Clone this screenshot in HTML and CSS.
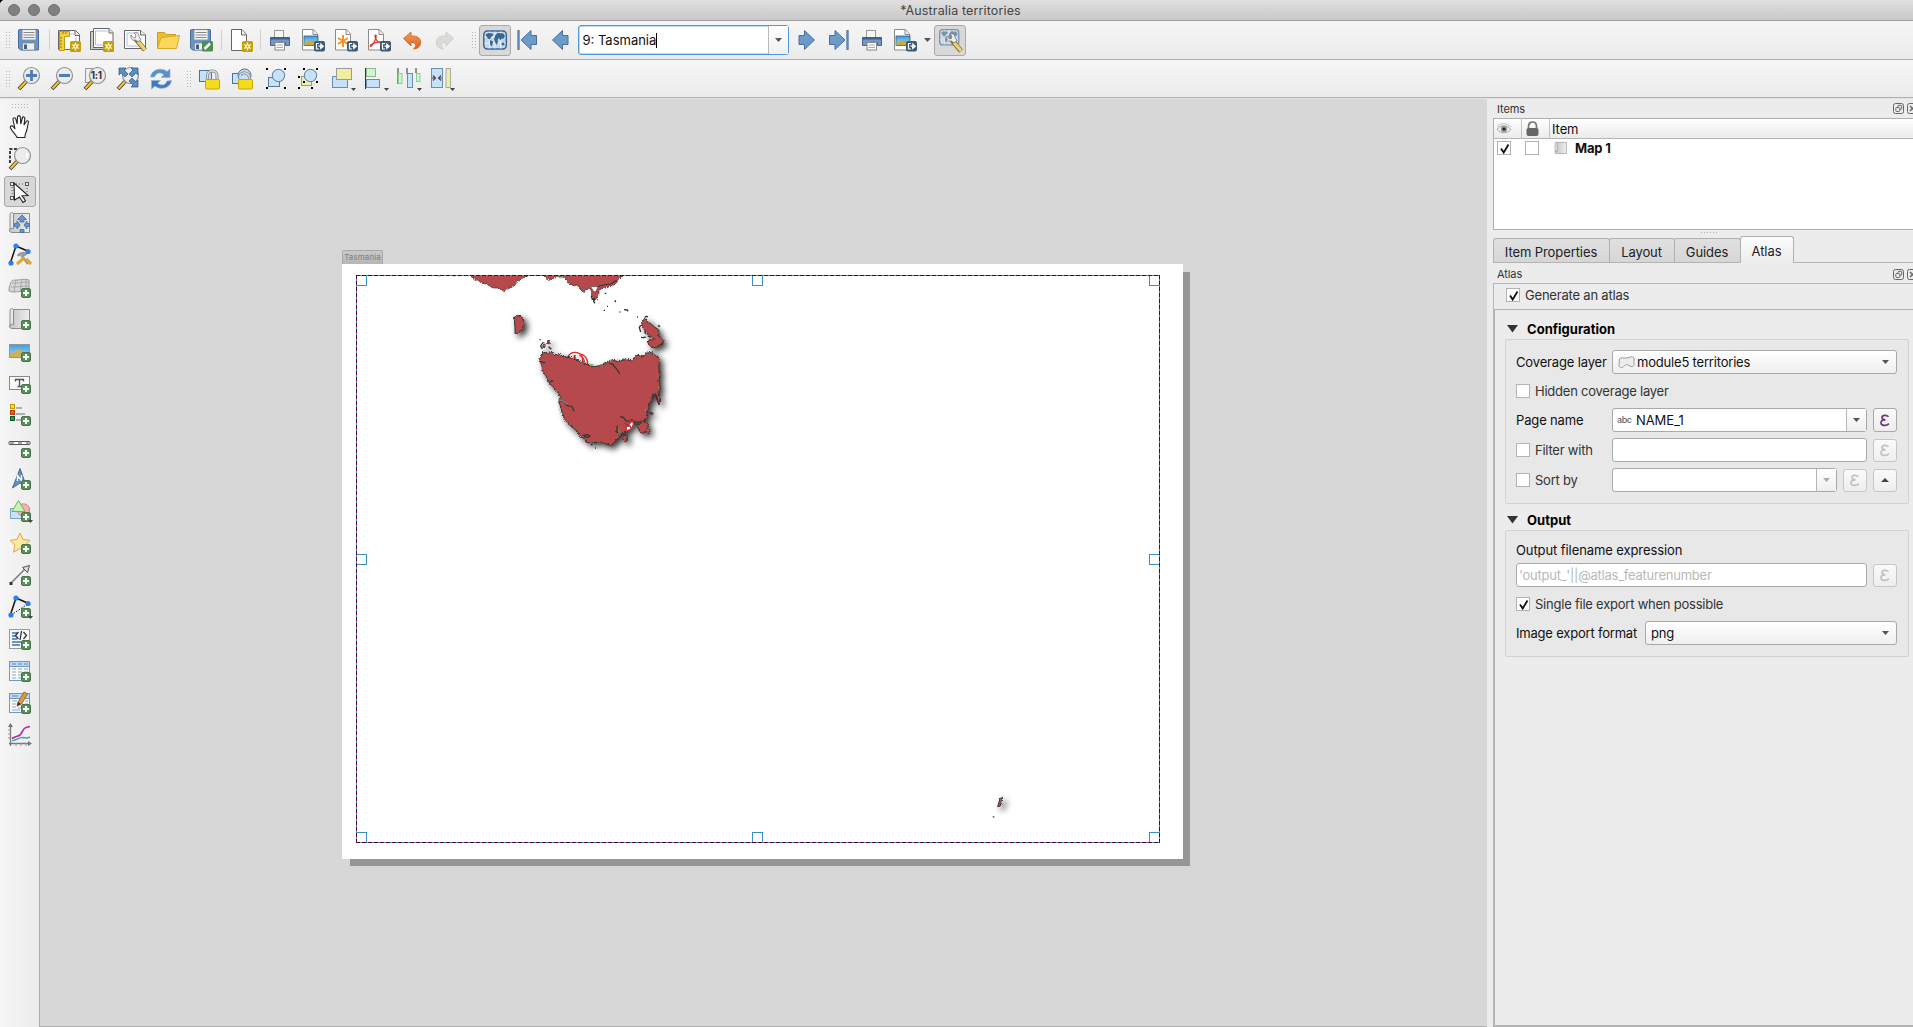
FILE: index.html
```html
<!DOCTYPE html>
<html lang="en">
<head>
<meta charset="utf-8">
<title>*Australia territories</title>
<link rel="stylesheet" href="styles.css">
</head>
<body>
<svg class="defs" width="0" height="0">
  <defs>
    <linearGradient id="sky" x1="0" y1="0" x2="0" y2="1"><stop offset="0" stop-color="#3f9be0"/><stop offset="1" stop-color="#a6dcf4"/></linearGradient>
    <linearGradient id="metal" x1="0" y1="0" x2="1" y2="0"><stop offset="0" stop-color="#c4c4c4"/><stop offset="1" stop-color="#eeeeee"/></linearGradient>
    <linearGradient id="undoFill" x1="0" y1="0" x2="0" y2="1"><stop offset="0" stop-color="#f39a5a"/><stop offset="1" stop-color="#d9651f"/></linearGradient>
    <filter id="rough" x="-5%" y="-5%" width="110%" height="110%"><feTurbulence type="turbulence" baseFrequency=".35" numOctaves="2" seed="4" result="n"/><feDisplacementMap in="SourceGraphic" in2="n" scale="9" xChannelSelector="R" yChannelSelector="G"/></filter>

    <g id="plus"><rect x="13.5" y="13.5" width="9" height="9" rx="1.5" fill="#5b8f5d" stroke="#447746"/><path d="M18 15v6M15 18h6" stroke="#fff" stroke-width="2"/></g>
    <g id="spark"><rect x="13" y="13" width="11" height="11" rx="1.5" fill="#c4a10a"/><path d="M18.500 14.500v8M15 16.500l7 4M22 16.500l-7 4" stroke="#fff6cf" stroke-width="1.300"/><circle cx="18.500" cy="18.500" r="2.300" fill="#fff6cf"/><circle cx="18.500" cy="18.500" r=".9" fill="#c4a10a"/></g>
    <g id="export"><rect x="13" y="13" width="11" height="10.500" rx="2" fill="#3f5b73"/><path d="M18 15.500h-2.500v5.500H18M17.500 18.200h4M19.800 16v4.500l2.500-2.200z" fill="none" stroke="#fff" stroke-width="1.200"/></g>
    <g id="sheet"><path d="M1.500 1.500h11l4 4.500v16h-15z" fill="#fff" stroke="#8a8a8a"/><path d="M12 1.500v5h4.500" fill="#eee" stroke="#8a8a8a"/></g>
    <g id="glass"><path d="M10 13.500l-8 8.500" stroke="#40382a" stroke-width="3.800"/><path d="M9 14.500l-6.500 7" stroke="#f3c531" stroke-width="2.200"/><circle cx="14.500" cy="8.500" r="8" fill="#ececec" stroke="#909090" stroke-width="1.200"/></g>
    <g id="wrench"><path d="M10 9l10 12" stroke="#7d6a2b" stroke-width="5"/><path d="M13 12.500l7 8.300" stroke="#ecd470" stroke-width="3.300"/><path d="M6 6l2.500 3 2-.5.300-2.500L9 4c3-1 5 .5 5 3.500l2 3-3 2.500-2.500-2C7.500 12 5 9.500 6 6z" fill="#eee" stroke="#777" stroke-width=".8"/></g>
    <g id="floppy"><path d="M2.500 1.500h18.500l.5.500v20h-18l-2-2v-18z" fill="#6a92c3" stroke="#4a6f9e"/><rect x="5.500" y="2" width="13" height="9.500" fill="#f4f4f4" stroke="#ccc" stroke-width=".5"/><path d="M6.500 4.500h11M6.500 7h11M6.500 9.500h11" stroke="#888" stroke-width="1"/><rect x="5.500" y="15" width="12" height="7" fill="#eee" stroke="#777" stroke-width=".6"/><rect x="7" y="16.500" width="3" height="4.500" fill="#3d5e8b"/></g>
    <g id="nodes"><path d="M2.500 19.500L8 3M8 3l11.500 5" stroke="#111" stroke-width="1.500" fill="none"/></g>
    <g id="dots3" fill="#2d7ff0"><circle cx="8" cy="3" r="2.600"/><circle cx="20" cy="8.500" r="2.600"/><circle cx="3" cy="20" r="2.600"/></g>
    <g id="worldmap"><rect x=".8" y="3" width="22.500" height="18" rx="3.500" fill="#c3d8ee" stroke="#3d6694" stroke-width="1.500"/><path d="M1.500 9h21M1.500 15h21M6.500 3.500v17M12 3.500v17M17.500 3.500v17" stroke="#e6f0fa" stroke-width="1"/><path d="M2.500 6.500l3-1.500 4 .5 1 1.500-2.500 2-1 2.500-2-1-1.500-2zM7 12l3 1.500-.5 3-1.500 2-1-3zM12.500 7l2-2 6 .5 1.500 3-2 2.500-1.500-.5-1 2-1.500-2.500-1.500 2 .5 2-1.500 3-1.500-3-1-3zM18.500 15l2.500-.5.500 2.500-2.500.5z" fill="#39658f"/></g>
    <g id="roll"><path d="M5 2.500h16.500v19H4c-3 0-3-3-1.500-3.500" fill="url(#metal)" stroke="#8c8c8c"/><path d="M2 18V3.500C2 1 5.500 1 5.500 3.500v14c-2-.5-3.500 0-3.500 1.500z" fill="#e8e8e8" stroke="#8c8c8c"/></g>
    <g id="padlock"><path d="M8.500 13V8.500c0-6 9.500-6 9.500 0V13" fill="none" stroke="#888" stroke-width="3"/><path d="M8.500 13V8.500c0-6 9.500-6 9.500 0V13" fill="none" stroke="#ddd" stroke-width="1.400"/><rect x="6.500" y="12.500" width="14" height="9.500" rx="1" fill="#f2dc1c" stroke="#c9a505"/></g>
    <g id="printer"><path d="M6.500 10V2.500h9V10" fill="#f5f5f5" stroke="#999"/><path d="M2.500 9.500h19v8h-4v-3h-10v3h-5z" fill="#6f98c8" stroke="#44668f"/><path d="M2.500 9.500h19v2h-19z" fill="#3e6088"/><rect x="7" y="14.500" width="9.500" height="7.500" fill="#fff" stroke="#888"/><path d="M8.500 17h6.500M8.500 19.500h6.500" stroke="#aaa"/></g>
    <g id="image"><use href="#sheet"/><rect x="3" y="8" width="14" height="9.500" fill="url(#sky)" stroke="#3b5d77" stroke-width=".8"/><path d="M3.400 15l5-2.500 4 .5 4.200 2v2H3.400z" fill="#c6a941"/><use href="#export"/></g>
    <g id="arrowL"><path d="M2.500 12L12.500 2.500v5H18v9h-5.500v5z" fill="#6d9ac9" stroke="#44709f"/></g>
    <g id="caret"><path d="M0 0h7L3.500 4z"/></g>
    <g id="eps"><path d="M8.500 2.800C6.500.6 2 1 2 3.600c0 1.500 1.200 2.200 3.500 2.200C2.700 5.800 1 6.700 1 8.700c0 3.200 5.300 3.700 8 1" fill="none" stroke="currentColor" stroke-width="1.700"/></g>
    <g id="float"><rect x=".5" y=".5" width="10" height="10" rx="2"/><rect x="2.800" y="4.500" width="4" height="4" rx="1"/><path d="M5 4V3c0-.5.300-.7.700-.7H8c.5 0 .7.300.7.700v2.500c0 .4-.2.700-.7.700H7"/></g>
    <g id="close"><rect x=".5" y=".5" width="10" height="10" rx="2"/><path d="M3 3l5 5M8 3L3 8" stroke-width="1.500"/></g>
    <g id="tick"><path d="M3 6.500l2.700 4L10.500 2.500" fill="none" stroke="#111" stroke-width="1.800"/></g>
  </defs>
</svg>

<div class="window">
  <header class="titlebar">
    <div class="lights"><i></i><i></i><i></i></div>
    <span class="title">*Australia territories</span>
  </header>

  <div class="toolbar bar-main">
    <i class="grip"></i>
    <div class="icons lead">
      <svg class="ic" viewBox="0 0 24 24"><use href="#floppy"/></svg>
      <i class="sep"></i>
      <svg class="ic" viewBox="0 0 24 24"><path d="M1.500 2.500h17l4 4v15h-21z" fill="#fff" stroke="#666"/><path d="M18 2.500v5h4.500" fill="#eee" stroke="#666"/><path d="M8 6h9M19 9v10" stroke="#a9bfe8"/><path d="M2.500 22.500V3.500h10v5h-5v14z" fill="#f2cf3f" stroke="#c49b12"/><path d="M3 10h2M3 13h2M3 16h2M3 19h2M6 4v2M9 4v2" stroke="#9b7a0e"/><use href="#spark"/></svg>
      <svg class="ic" viewBox="0 0 24 24"><path d="M.5 3.500h3v16h15v2H.5z" fill="#ccc" stroke="#666"/><path d="M3.500.5h15.500l4 4v15H3.500z" fill="#fff" stroke="#666"/><path d="M19 .5v4.500h4" fill="#eee" stroke="#666"/><path d="M5.500 3h12M5.500 3v14h11" stroke="#a9bfe8" fill="none"/><use href="#spark"/></svg>
      <svg class="ic" viewBox="0 0 24 24"><path d="M1.500 2.500h16l5 4.500v13.500h-21z" fill="#fff" stroke="#666"/><path d="M17.500 2.500v4.500h5" fill="#eee" stroke="#666"/><path d="M4 5h12M4 5v13h13" stroke="#a9bfe8" fill="none"/><g transform="translate(2,1)"><use href="#wrench"/></g></svg>
      <svg class="ic" viewBox="0 0 24 24"><path d="M1.500 20V4.500h7l2 2h9v4" fill="#eebd33" stroke="#cf9c1b"/><path d="M1.500 20.500L5 9.500l18.500-2-3 13z" fill="#fbd75a" stroke="#d9a827"/></svg>
      <svg class="ic" viewBox="0 0 24 24"><use href="#floppy"/><rect x="13" y="13" width="11" height="10.500" rx="1.500" fill="#4f8f52"/><path d="M15.500 21l5.500-5.500" stroke="#fff" stroke-width="2.500"/></svg>
      <i class="sep"></i>
      <svg class="ic" viewBox="0 0 24 24"><path d="M2.500 1.500h10.500l4.500 5v16h-15z" fill="#fff" stroke="#666"/><path d="M12.500 1.500v5.500h5" fill="#eee" stroke="#666"/><use href="#spark"/></svg>
      <i class="sep tight"></i>
      <svg class="ic" viewBox="0 0 24 24"><use href="#printer"/></svg>
      <svg class="ic" viewBox="0 0 24 24"><use href="#image"/></svg>
      <svg class="ic" viewBox="0 0 24 24"><use href="#sheet"/><path d="M9 7v12M4 10l10 6M14 10L4 16" stroke="#f39322" stroke-width="2"/><use href="#export"/></svg>
      <svg class="ic" viewBox="0 0 24 24"><use href="#sheet"/><path d="M8.500 7c1.500 0 .5 6-4 11-1.500 1-2-.5.500-2 3-1.500 7-2.500 10-2M8.500 7c-1.500 1.500 1 7 5.500 8.500" fill="none" stroke="#e0352b" stroke-width="1.300"/><use href="#export"/></svg>
      <svg class="ic" viewBox="0 0 24 24"><path d="M3.500 10.500L11 4v4c7-.5 10.500 3 9.500 8-.7 3-3.500 5-7 5 3-2 3.500-7-2.500-6.500v3.500z" fill="url(#undoFill)" stroke="#cf621f" stroke-width=".8"/></svg>
      <svg class="ic" viewBox="0 0 24 24"><path d="M20.500 10.500L13 4v4c-7-.5-10.500 3-9.500 8 .7 3 3.500 5 7 5-3-2-3.500-7 2.500-6.500v3.500z" fill="#d9dbd7" stroke="#c9cbc7" stroke-width=".8"/></svg>
    </div>
    <i class="grip grip-atlas"></i>
    <button class="tool on"><svg class="ic" viewBox="0 0 24 24"><use href="#worldmap"/></svg></button>
    <svg class="ic first" viewBox="0 0 24 24"><g transform="translate(3.500,0)"><use href="#arrowL"/></g><path d="M3.500 2v20" stroke="#5d88b6" stroke-width="2.500"/></svg>
    <svg class="ic prev" viewBox="0 0 24 24"><g transform="translate(1,0)"><use href="#arrowL"/></g></svg>
    <div class="page-combo"><span>9: Tasmania</span><i class="cursor"></i><b><svg width="7" height="4" fill="#555"><use href="#caret"/></svg></b></div>
    <svg class="ic next" viewBox="0 0 24 24"><g transform="translate(23,0) scale(-1,1)"><use href="#arrowL"/></g></svg>
    <svg class="ic last" viewBox="0 0 24 24"><g transform="translate(20.500,0) scale(-1,1)"><use href="#arrowL"/></g><path d="M20.500 2v20" stroke="#5d88b6" stroke-width="2.500"/></svg>
    <svg class="ic prn" viewBox="0 0 24 24"><use href="#printer"/></svg>
    <svg class="ic exp" viewBox="0 0 24 24"><use href="#image"/></svg>
    <svg class="drop" width="7" height="4" fill="#555"><use href="#caret"/></svg>
    <button class="tool on"><svg class="ic" viewBox="0 0 24 24"><g opacity=".6" transform="translate(1,-1) scale(.85)"><use href="#worldmap"/></g><g transform="translate(3,2)"><use href="#wrench"/></g></svg></button>
  </div>

  <div class="toolbar bar-view">
    <i class="grip"></i>
    <div class="icons lead">
      <svg class="ic" viewBox="0 0 24 24"><use href="#glass"/><path d="M14.500 3v11M9 8.500h11" stroke="#4b7fb8" stroke-width="2.800"/></svg>
      <svg class="ic" viewBox="0 0 24 24"><use href="#glass"/><path d="M9 8.500h11" stroke="#4b7fb8" stroke-width="2.800"/></svg>
      <svg class="ic" viewBox="0 0 24 24"><path d="M2.500 1.500h8v14h-8z" fill="#eee" stroke="#999"/><use href="#glass"/><text x="7.800" y="12.300" class="one">1:1</text></svg>
      <svg class="ic" viewBox="0 0 24 24"><use href="#glass"/><path d="M3 1h7L8 3l4 4-3 3-4-4-2 2zM22 1v7l-2-2-4 4-3-3 4-4-2-2zM22 20h-7l2-2-4-4 3-3 4 4 2-2z" fill="#5b8cc2" stroke="#35618f" stroke-width=".8"/></svg>
      <svg class="ic" viewBox="0 0 24 24"><path d="M1.500 10C2.500 2 13 0 18 4.500l3-2.500v8.500h-9l3-2.800c-4-3-8-2-9.500 2.300z" fill="#5b8fca" stroke="#86b0de" stroke-width=".6"/><path d="M22.500 13.500c-1 8-11.500 10-16.500 5.500l-3.500 3v-8.500h9l-3 2.800c4 3 8 2 9.500-2.300z" fill="#4479b9" stroke="#86b0de" stroke-width=".6"/></svg>
    </div>
    <i class="grip grip-actions"></i>
    <div class="icons actions">
      <svg class="ic" viewBox="0 0 24 24"><rect x=".5" y="3.500" width="12" height="11" fill="#c7e2f8" stroke="#4b7394"/><use href="#padlock"/></svg>
      <svg class="ic" viewBox="0 0 24 24"><rect x=".5" y="6.500" width="9" height="10" fill="#c7e2f8" stroke="#4b7394"/><circle cx="12.500" cy="8.500" r="6.500" fill="#c7e2f8" stroke="#4b7394"/><path d="M8 9c1-5 10-4 9.500 3" fill="none" stroke="#888" stroke-width="3"/><path d="M8 9c1-5 10-4 9.500 3" fill="none" stroke="#ddd" stroke-width="1.400"/><rect x="6.500" y="12.500" width="14" height="9.500" rx="1" fill="#f2dc1c" stroke="#c9a505"/></svg>
      <svg class="ic" viewBox="1 0 24 24"><rect x="4.500" y="10.500" width="11" height="9" fill="#c7e2f8" stroke="#56799a"/><circle cx="14.500" cy="8.500" r="6.200" fill="#c7e2f8" stroke="#56799a"/><path d="M2 2h2M20 2h2M2 21h2M20 21h2" stroke="#000" stroke-width="2"/></svg>
      <svg class="ic" viewBox="2 0 24 24"><rect x="5.500" y="9.500" width="10" height="9" fill="#f3eea6" stroke="#999"/><circle cx="14.500" cy="8.500" r="6.200" fill="#c7e2f8" stroke="#56799a"/><path d="M7 2h2M20 2h2M20 15h2M2 10h2M2 21h2M15 21h2M7 15h2" stroke="#000" stroke-width="2"/></svg>
      <svg class="ic" viewBox="0 0 24 24"><rect x="1.500" y="9.500" width="15" height="11" fill="#c7e2f8" stroke="#6b8fab"/><rect x="5.500" y="1.500" width="15" height="11" fill="#f1eea2" stroke="#999"/><path d="M20 21h5l-2.500 3z" fill="#444"/></svg>
      <svg class="ic" viewBox="0 0 24 24"><path d="M1.500 1v21" stroke="#333"/><rect x="2.500" y="1.500" width="9" height="8" fill="#cdf7cf" stroke="#8fb791"/><rect x="2.500" y="12.500" width="13" height="8" fill="#c7e2f8" stroke="#6b8fab"/><path d="M20 21h5l-2.500 3z" fill="#444"/></svg>
      <svg class="ic" viewBox="0 0 24 24"><path d="M1 1v16M10 1v6M19 1v5" stroke="#333"/><rect x="1.500" y="6.500" width="3.500" height="10" fill="#cdf7cf" stroke="#8fcb91"/><rect x="10.500" y="6.500" width="5" height="14" fill="#c7e2f8" stroke="#6b8fab"/><rect x="19.500" y="6.500" width="3.500" height="8" fill="#cdf7cf" stroke="#8fcb91"/><path d="M20 21h5l-2.500 3z" fill="#444"/></svg>
      <svg class="ic" viewBox="0 0 24 24"><rect x="1.500" y="1.500" width="11" height="19" fill="#c7e2f8" stroke="#6b8fab"/><rect x="16" y="1.500" width="4.500" height="19" fill="#f1eea2" stroke="#aaa"/><path d="M2 11h3M3 8.500L5.500 11 3 13.500M12 11H9M11 8.500L8.500 11l2.500 2.500" fill="none" stroke="#444" stroke-width="1.100"/><path d="M20 21h5l-2.500 3z" fill="#444"/></svg>
    </div>
  </div>

  <main class="body">
    <nav class="sidebar">
      <i class="hgrip"></i>
      <svg class="ic" viewBox="0 0 24 24"><path d="M9 22.500c-1-3-5-6-6.500-9.500C1.500 11 4 10 5.500 12l1.500 2L5 4.500c-.3-2 2.200-2.500 2.800-.5l1.400 5L9.500 2c.2-1.800 2.700-1.800 2.800 0l.5 7 1.500-6c.5-1.700 2.700-1.300 2.500.5L16 10l2.200-3.500c1-1.400 2.700-.5 2.200 1.200-1.500 5-1 8-3 11l-.5 3.800z" fill="#fff" stroke="#222" stroke-width="1.100"/></svg>
      <svg class="ic" viewBox="0 0 24 24"><path d="M2 16V2h12" fill="none" stroke="#000" stroke-width="1.500" stroke-dasharray="3 1.500"/><use href="#glass"/><path d="M19 6v5" stroke="#fff" stroke-width="1.500"/></svg>
      <button class="tool on wide"><svg class="ic" viewBox="0 0 24 24"><path d="M5 4h14M4 4v14M4 18h14M19 5v8" stroke="#555" stroke-dasharray="1 2"/><g fill="#eee" stroke="#555"><rect x="2.500" y="2.500" width="3" height="3"/><rect x="17.500" y="2.500" width="3" height="3"/><rect x="2.500" y="16.500" width="3" height="3"/></g><path d="M6 3l14 12.500-6 .3 3.500 5-2.500 1.700-3.500-5.500-5 3z" fill="#fff" stroke="#222" stroke-width="1.100"/></svg></button>
      <svg class="ic" viewBox="0 0 24 24"><use href="#roll"/><path d="M14 4l4.500 4.500H16V11h-4V8.500H9.500zM6.500 12.500h2.500V10l3 4-3 4v-2.500H6.500zM21.500 12.500H19V10l-3 4 3 4v-2.500h2.500zM12 18.500h4v3h-4z" fill="#6b96c8" stroke="#3d6b9e" stroke-width=".8"/></svg>
      <svg class="ic" viewBox="0 0 24 24"><use href="#nodes"/><path d="M10 13c2-4 8-3 8-2l-4 2 6 8" fill="none" stroke="#999" stroke-width="2.500"/><path d="M9 21l7-6M18 16l5 5" stroke="#e0a82e" stroke-width="3.200"/><use href="#dots3"/></svg>
      <svg class="ic" viewBox="0 0 24 24"><path d="M1 16C1 10 3 7 5 5c5 1 10-2 16 0v12c-5-3-13 2-20-1z" fill="#d8d8d8" stroke="#999"/><path d="M3 12c6 1 12-2 18-.5M4 8c6 1 11-2 17-.5M8 5l-2 12M14 4l-2 12M18 4v12" fill="none" stroke="#aaa"/><use href="#plus"/></svg>
      <svg class="ic" viewBox="0 0 24 24"><use href="#roll"/><use href="#plus"/></svg>
      <svg class="ic" viewBox="0 0 24 24"><rect x="1.500" y="5.500" width="20" height="13" fill="url(#sky)" stroke="#8a9aa3"/><path d="M2 15l9-5 5 3 5.500 1v4H2z" fill="#cdb257"/><use href="#plus"/></svg>
      <svg class="ic" viewBox="0 0 24 24"><rect x="1.500" y="5.500" width="20" height="13" fill="#fafafa" stroke="#888"/><path d="M7.500 10.500V8.500h8v2M11.500 8.500v7M9.500 15.500h4" fill="none" stroke="#555" stroke-width="1.300"/><use href="#plus"/></svg>
      <svg class="ic" viewBox="0 0 24 24"><path d="M8 5h6M8 11h9M8 17h5" stroke="#999" stroke-width="1.500"/><g stroke-width="1"><rect x="2.500" y="1.500" width="4" height="4" fill="#fcdc23" stroke="#c59a08"/><rect x="2.500" y="7.500" width="4" height="4" fill="#f25a20" stroke="#b5390b"/><rect x="2.500" y="13.500" width="4" height="4" fill="#17a048" stroke="#0b5f2a"/></g><use href="#plus"/></svg>
      <svg class="ic" viewBox="0 0 24 24"><rect x="1" y="6.500" width="21" height="3" rx=".5" fill="#fff" stroke="#555"/><path d="M2 8h4M10 8h4M18 8h3" stroke="#aaa" stroke-width="2"/><use href="#plus"/></svg>
      <svg class="ic" viewBox="0 0 24 24"><path d="M12 1.500l7 19.500-7-5-7.500 5z" fill="#658fbd" stroke="#466b94"/><path d="M9.500 14V8.500l4 5V8" stroke="#fff" stroke-width="1.400" fill="none"/><use href="#plus"/></svg>
      <svg class="ic" viewBox="0 0 24 24"><rect x="2.500" y="9.500" width="12" height="10" fill="#c7e2f8" stroke="#7ea6c4"/><circle cx="15.500" cy="11" r="6.200" fill="#f6b3b0" stroke="#cf8683"/><path d="M10.500 1.500l6.500 11H4z" fill="#c4f3b2" stroke="#77ab6c"/><use href="#plus"/><path d="M20 21h5l-2.500 3z" fill="#444"/></svg>
      <svg class="ic" viewBox="0 0 24 24"><path d="M12 2l3 6.500 7 .8-5 4.900 1.500 7L12 17.500l-6.500 3.700 1.500-7-5-4.900 7-.8z" fill="#fceaa0" stroke="#e0a659"/><use href="#plus"/></svg>
      <svg class="ic" viewBox="0 0 24 24"><path d="M3 20L19 4" stroke="#777" stroke-width="1.400"/><path d="M14.500 4.500l7-2-2 7z" fill="#ddd" stroke="#555"/><rect x="1.500" y="19" width="3" height="3" fill="#333"/><use href="#plus"/></svg>
      <svg class="ic" viewBox="0 0 24 24"><use href="#nodes"/><path d="M3 20l17-11" stroke="#111" stroke-dasharray="1.500 1.500"/><use href="#dots3"/><use href="#plus"/><path d="M20 21h5l-2.500 3z" fill="#444"/></svg>
      <svg class="ic" viewBox="0 0 24 24"><rect x="1.500" y="2.500" width="20" height="19" fill="#f8f8f8" stroke="#999"/><path d="M4 6h5M4 9h4M4 12h5M4 15h9M4 18h8" stroke="#6a94c4" stroke-width="1.800"/><path d="M10.500 5L7.500 8.500l3 3.500M13.500 4l-1.500 9M15.500 5l3 3.500-3 3.500" fill="none" stroke="#333" stroke-width="1.300"/><use href="#plus"/></svg>
      <svg class="ic" viewBox="0 0 24 24"><rect x="1.500" y="2.500" width="20" height="19" fill="#f8f8f8" stroke="#6d98c4"/><rect x="2" y="3" width="19" height="4" fill="#b9daf2"/><path d="M4 5h4M10 5h4M16 5h4" stroke="#5d89b7"/><path d="M4 10h4M10 10h4M16 10h4M4 13h4M10 13h4M16 13h4M4 16h4M10 16h3M4 19h4M10 19h3" stroke="#90a8c0"/><path d="M2 7.500h19" stroke="#6d98c4"/><use href="#plus"/></svg>
      <svg class="ic" viewBox="0 0 24 24"><rect x="1.500" y="2.500" width="20" height="19" fill="#f8f8f8" stroke="#6d98c4"/><rect x="2" y="3" width="19" height="4" fill="#b9daf2"/><path d="M4 5h6" stroke="#5d89b7"/><path d="M4 10h5M4 13h4M4 16h4M10 17h3M17 10h3M17 13h3M4 19h8" stroke="#90a8c0"/><path d="M2 7.500h19" stroke="#6d98c4"/><path d="M9 15l1-4 6-10 3.500 2-6 10z" fill="#e39a3f" stroke="#7a552a" stroke-width=".8"/><path d="M9 15l1-4 3 2z" fill="#333"/><use href="#plus"/></svg>
      <svg class="ic" viewBox="0 0 24 24"><path d="M2.500 23V3M1 20.500h21" stroke="#777" stroke-width="1.300"/><path d="M2.500 0L5 4H0zM24 20.500L20 18v5z" fill="#777"/><path d="M3 7h-3M3 11h-3M3 15h-3M8 20v3M13 20v3M18 20v3" stroke="#999"/><path d="M4 17.500c5 .5 6-3 10-3s4 1.500 8-.5" fill="none" stroke="#46a0b5" stroke-width="1.500"/><path d="M4 15.500c3-2 6-2 8-3.500 3-3 3-7 6-7.500l4-1" fill="none" stroke="#b5279b" stroke-width="1.700"/></svg>
    </nav>

    <section class="canvas">
      <span class="page-tag">Tasmania</span>
      <div class="page">
        <div class="map-item">
          <svg class="map" width="804" height="568" viewBox="0 0 804 568">
            <g transform="translate(-26,-35) scale(.33333)">
              <path class="mainland" d="M418 100L430 114 446 124 464 129 480 138 490 141 500 141 512 147 520 152 530 144 548 136 558 124 566 119 576 112 592 104zM640 100L646 112 656 118 668 112 690 106 704 112 716 130 730 134 738 132 748 142 754 155 764 152 772 144 782 148 782 166 790 178 798 178 803 166 804 150 812 144 836 138 852 130 862 118 878 104z"/>
              <g fill="#fff" stroke="#e32b2b" stroke-width="4">
                <path d="M740 345c18-8 36 8 32 30l-18-8"/>
                <path d="M714 350c8-18 38-18 43 4l2 18-24-7z"/>
                <path d="M734 345v15h12" fill="none" stroke-width="6"/>
                <path d="M748 346c12 4 16 14 14 22" fill="none"/>
              </g>
              <g class="land">
                <path d="M549 230L557 227 560 223 572 228 578 234 580 250 577 266 570 270 564 274 560 279 552 277 552 258z"/>
                <path d="M932 246L938 236 946 234 952 244 962 250 970 258 982 266 985 274 983 286 990 292 1001 303 996 310 984 312 978 318 968 320 956 314 950 304 956 298 972 296 966 290 954 286 946 272 936 262z"/>
                <path d="M636 332L650 339 664 334 672 345 688 340 694 346 714 350 740 359 770 373 790 377 812 373 830 364 848 358 862 362 884 356 904 360 918 342 936 348 950 336 964 334 968 342 978 346 986 356 983 380 988 400 984 420 988 440 984 458 989 480 984 492 978 466 966 460 962 480 954 490 954 508 948 512 950 530 940 542 918 544 904 538 906 552 896 566 884 574 872 580 860 596 852 600 842 615 826 608 800 604 768 606 760 592 750 588 740 572 716 552 704 540 694 516 684 484 690 470 680 454 668 440 652 422 648 410 636 392 630 366 626 354 632 348z"/>
                <path d="M914 548L926 552 934 542 946 544 954 552 950 562 957 570 954 578 944 574 934 578 926 570zM876 586L886 582 892 592 886 604 876 598zM958 515h8v8h-6zM636 314L642 308 642 320 636 324zM650 302h8v6h-8z"/>
                <path d="M2000 1697L2007 1673 2015 1669 2014 1680 2008 1695z"/>
              </g>
              <g class="rock">
                <path d="M323 107h8M370 107h6M386 107h4M824 159l5 2M855 181l2 6M831 199h3M821 211h4M882 209l10 1 2 4M868 216h3M921 231h3M944 232l6-3 4 2M932 256l-4 6 4 14M984 256l6 4M933 292l8 1 6-2M628 299h4M640 306l-8 12 4 8M656 320l8 8M784 168l3 10 6-2-2 8 4 6M783 612l4 4M795 624h3M944 274l3 8"/>
              </g>
              <g class="rivers">
                <path d="M848 373l12 14 10 15M838 370l14 4M690 482l12 2 8 12 16 4 6 14M660 428l4-6 6 2M632 366l14 2M758 586l14-2 8 4-6 4-12-2M870 530l10 2 8 10 12 2M856 574l8 4M862 556l-2 12 6 12M976 460l8 28M800 141l20-6 22-3 18-11"/>
                <path d="M684 479l16 4 12 10" stroke="#888"/>
              </g>
              <path class="bits" d="M684 110l8 4 10-2M780 374h10M810 374h6M838 363h6M878 357h6M984 410v6M985 440v6M866 570v8M946 508v6"/>
              <path d="M782 140l22 0-6 14-6 2z" fill="#fff" stroke="#555" stroke-width="2"/>
              <path d="M908 542c6 14-2 28-18 31l-2-12 10-10z" fill="#fff" stroke="#d03034" stroke-width="4"/>
              <path d="M888 560l8-6 8 10M884 548l12 12" stroke="#a33" stroke-width="4" fill="none"/>
              <path d="M1988 1730h4v4" fill="none" stroke="#555" stroke-width="3"/>
            </g>
          </svg>
          <svg class="frame" width="804" height="568"><rect x=".5" y=".5" width="803" height="567" fill="none" stroke="#3f93c4"/><path d="M0 .5h804M0 567.500h804M.5 0v568M803.500 0v568" fill="none" stroke="#560038" stroke-dasharray="4 2"/></svg>
          <i class="handle tl"></i><i class="handle tc"></i><i class="handle tr"></i>
          <i class="handle ml"></i><i class="handle mr"></i>
          <i class="handle bl"></i><i class="handle bc"></i><i class="handle br"></i>
        </div>
      </div>
    </section>

    <aside class="docks">
      <div class="dock-title items-title"><span>Items</span><svg width="20" height="11"><use href="#float"/><use href="#close" x="14"/></svg></div>
      <div class="tree">
        <div class="tree-head">
          <div class="c1"><svg width="16" height="12" viewBox="0 0 16 12"><path d="M1 6.500C4 1.500 11 1.500 15 6.500 11 11 5 11 1 6.500z" fill="#eee" stroke="#aaa"/><path d="M1 3.500C5-.5 11 0 15 4" fill="none" stroke="#bbb"/><circle cx="8" cy="6" r="3.200" fill="#9a9a94"/><circle cx="8" cy="6" r="1.600" fill="#222"/></svg></div>
          <div class="c2"><svg width="13" height="16" viewBox="0 0 13 16"><path d="M2.500 8V5.500c0-6 8-6 8 0V8" fill="none" stroke="#777" stroke-width="1.700"/><rect x=".5" y="7" width="12" height="8" rx="2" fill="#666"/></svg></div>
          <div class="c3">Item</div>
        </div>
        <div class="tree-row">
          <i class="check"><svg width="12" height="12"><use href="#tick"/></svg></i>
          <i class="check second"></i>
          <svg class="mapicon" width="14" height="14" viewBox="0 0 24 24"><use href="#roll"/></svg>
          <b>Map 1</b>
        </div>
      </div>
      <i class="split"></i>
      <div class="tabs">
        <span class="tab t1">Item Properties</span><span class="tab t2">Layout</span><span class="tab t3">Guides</span><span class="tab t4 active">Atlas</span>
      </div>
      <div class="dock-title atlas-title"><span>Atlas</span><svg width="20" height="11"><use href="#float"/><use href="#close" x="14"/></svg></div>
      <div class="atlas">
        <div class="generate"><i class="check"><svg width="12" height="12"><use href="#tick"/></svg></i><span>Generate an atlas</span></div>
        <div class="scroll">
          <h3><svg width="11" height="8"><path d="M0 0h11L5.500 7.500z" fill="#333"/></svg>Configuration</h3>
          <div class="group config">
            <div class="row"><label class="lab">Coverage layer</label><div class="combo grow"><svg width="17" height="13" viewBox="0 0 17 13"><path d="M1.500 3C3 .5 6 2.500 9 2S14-.5 15.500 1.500s0 3 .5 6-2 4-5 2-4 0-6 1.500-4 .5-4-2 .5-4 .5-6z" fill="#ececec" stroke="#999"/></svg><span>module5 territories</span><svg class="arr" width="8" height="4" fill="#555"><use href="#caret"/></svg></div></div>
            <div class="row"><i class="check"></i><span class="ctext">Hidden coverage layer</span></div>
            <div class="row"><label class="lab">Page name</label><div class="field grow"><small>abc</small><span>NAME_1</span><b><svg width="7" height="4" fill="#555"><use href="#caret"/></svg></b></div><div class="eps on"><svg width="10" height="12"><use href="#eps"/></svg></div></div>
            <div class="row"><i class="check"></i><span class="ctext lab2">Filter with</span><div class="field grow"></div><div class="eps"><svg width="10" height="12"><use href="#eps"/></svg></div></div>
            <div class="row"><i class="check"></i><span class="ctext lab2">Sort by</span><div class="field grow"><b class="dim"><svg width="7" height="4" fill="#aaa"><use href="#caret"/></svg></b></div><div class="eps"><svg width="10" height="12"><use href="#eps"/></svg></div><div class="eps"><svg width="8" height="4"><path d="M0 4h8L4 0z" fill="#444"/></svg></div></div>
          </div>
          <h3 class="h-out"><svg width="11" height="8"><path d="M0 0h11L5.500 7.500z" fill="#333"/></svg>Output</h3>
          <div class="group output">
            <div class="olabel">Output filename expression</div>
            <div class="row"><div class="field grow ghost"><span>'output_'||@atlas_featurenumber</span></div><div class="eps"><svg width="10" height="12"><use href="#eps"/></svg></div></div>
            <div class="row"><i class="check"><svg width="12" height="12"><use href="#tick"/></svg></i><span class="ctext">Single file export when possible</span></div>
            <div class="row"><label class="lab3">Image export format</label><div class="combo grow"><span class="png">png</span><svg class="arr" width="8" height="4" fill="#555"><use href="#caret"/></svg></div></div>
          </div>
        </div>
      </div>
    </aside>
  </main>
</div>
</body>
</html>
```
FILE: styles.css
```css
* { box-sizing: border-box; }
body { margin: 0; background: #000; font: 13px/16px Inter, "Liberation Sans", sans-serif; letter-spacing: -.09px; color: #111; overflow: hidden; }
svg { display: block; flex: none; overflow: visible; }
button { padding: 0; margin: 0; font: inherit; }
.defs { position: absolute; }
.window { width: 1913px; height: 1027px; display: flex; flex-direction: column; background: #ececec; border-top-left-radius: 5px; overflow: hidden; }

.titlebar { height: 21px; flex: none; display: grid; grid-template-columns: 1fr auto 1fr; align-items: center; background: linear-gradient(#dfdfdf, #c9c9c9); border-bottom: 1px solid #a0a0a0; }
.lights { display: flex; gap: 8px; padding-left: 8px; }
.lights i { width: 12px; height: 12px; border-radius: 50%; background: #808083; border: 1px solid #717175; }
.title { grid-column: 2; font-size: 12.5px; letter-spacing: .14px; color: #444; padding: 1px 0 0 8px; }

.toolbar { flex: none; display: flex; align-items: center; background: linear-gradient(#f6f6f6, #ebebeb); border-bottom: 1px solid #b0b0b0; padding-left: 5px; }
.bar-main { height: 39px; }
.bar-view { height: 38px; }
.ic { width: 24px; height: 24px; }
.grip { width: 5px; height: 18px; flex: none; background-image: radial-gradient(circle, #b5b5b5 .8px, transparent 1px); background-size: 3px 3px; }
.icons { display: flex; gap: 9px; align-items: center; }
.lead { margin-left: 7px; }
.sep { width: 1px; height: 20px; background: #cfcfcf; margin: 0 -1.400px; }
.sep.tight { margin: 0 -2px; }
.grip-atlas { margin-left: 14px; }
.tool { border: 1px solid #a9a9a9; border-radius: 3px; background: #d8d8d8; width: 32px; height: 31px; display: flex; align-items: center; justify-content: center; flex: none; }
.grip-atlas + .tool { margin-left: 3px; }
.first { margin-left: 4px; }
.prev { margin-left: 10px; }
.page-combo { width: 211px; height: 30px; margin-left: 5px; border: 1px solid #4f98de; border-radius: 3px; background: #fff; display: flex; flex: none; align-items: center; padding-left: 3px; box-shadow: inset 0 0 0 .5px #7db4ea; }
.page-combo span { letter-spacing: 0; font-size: 13px; color: #111; }
.cursor { width: 1px; height: 15px; background: #000; }
.page-combo b { margin-left: auto; width: 20px; height: 28px; border-left: 1px solid #b9b9b9; display: grid; place-items: center; background: linear-gradient(#fff, #f1f1f1); }
.next { margin-left: 5px; }
.last { margin-left: 9px; }
.prn { margin-left: 9px; }
.exp { margin-left: 9px; }
.drop { margin-left: 7px; }
.drop + .tool { margin-left: 3px; }
.grip-actions { margin-left: 13px; }
.actions { margin-left: 8px; gap: 9px; }
.one { font: bold 10px Inter, sans-serif; fill: #333; letter-spacing: -.4px; }

.body { flex: 1; display: flex; min-height: 0; border-top: 1px solid #e4e4e4; }
.sidebar { width: 40px; flex: none; border-right: 1px solid #acacac; background: linear-gradient(90deg, #f6f6f6, #ececec); display: flex; flex-direction: column; align-items: center; gap: 8px; padding: 4px 0 0 1px; }
.hgrip { width: 18px; height: 5px; margin-bottom: -1px; background-image: radial-gradient(circle, #b5b5b5 .8px, transparent 1px); background-size: 3px 3px; }
.tool.wide { width: 32px; height: 31px; margin: -3px 0 -4px -1px; }

.canvas { width: 1447px; flex: none; background: #d7d7d7; position: relative; border-bottom: 1px solid #b0b0b0; }
.page-tag { position: absolute; left: 302px; top: 151px; width: 41px; height: 14px; border: 1px solid #a8a8a8; border-bottom: 0; border-radius: 2px 2px 0 0; background: linear-gradient(#c9c9c9, #b6b6b6); color: #808080; font-size: 8px; letter-spacing: .1px; line-height: 13px; text-align: center; }
.page { position: absolute; left: 302px; top: 165px; width: 841px; height: 595px; background: #fff; box-shadow: 7px 7px 0 #969696; clip-path: polygon(0 0, 841px 0, 841px 8px, 848px 8px, 848px 602px, 8px 602px, 8px 595px, 0 595px); }
.map-item { position: absolute; left: 14px; top: 11px; width: 804px; height: 568px; overflow: hidden; }
.map, .frame { position: absolute; left: 0; top: 0; overflow: hidden; }
.frame { shape-rendering: crispEdges; }
.mainland { fill: #b5494c; stroke: #4a3a3a; stroke-width: 2.500; filter: url(#rough); }
.land { fill: #b5494c; stroke: #333; stroke-width: 3; filter: url(#rough) drop-shadow(10px 10px 9px rgba(0,0,0,.8)); }
.rock { fill: none; stroke: #333; stroke-width: 4; }
.rivers { fill: none; stroke: #333; stroke-width: 3.500; }
.bits { fill: none; stroke: #6fae3f; stroke-width: 3; }
.handle { position: absolute; width: 11px; height: 11px; border: 1px solid #3c8fc5; background: #fff; }
.tl { left: 0; top: 0; border-width: 0 1px 1px 0; margin: 1px; width: 10px; height: 10px; }
.tc { left: 396px; top: 0; border-top: 0; margin-top: 1px; height: 10px; }
.tr { right: 0; top: 0; border-width: 0 0 1px 1px; margin: 1px; width: 10px; height: 10px; }
.ml { left: 0; top: 279px; border-left: 0; margin-left: 1px; width: 10px; }
.mr { right: 0; top: 279px; border-right: 0; margin-right: 1px; width: 10px; }
.bl { left: 0; bottom: 0; border-width: 1px 1px 0 0; margin: 1px; width: 10px; height: 10px; }
.bc { left: 396px; bottom: 0; border-bottom: 0; margin-bottom: 1px; height: 10px; }
.br { right: 0; bottom: 0; border-width: 1px 0 0 1px; margin: 1px; width: 10px; height: 10px; }

.docks { flex: 1; min-width: 0; overflow: hidden; padding-left: 6px; display: flex; flex-direction: column; }
.dock-title { display: flex; align-items: center; justify-content: space-between; font-size: 11px; padding-left: 4px; color: #333; flex: none; }
.dock-title svg { fill: none; stroke: #666; stroke-width: 1; }
.items-title { height: 19px; }
.tree { height: 112px; flex: none; background: #fff; border: 1px solid #b0b0b0; border-right: 0; }
.tree-head { height: 20px; display: flex; background: linear-gradient(#fff, #ebebeb); border-bottom: 1px solid #b4b4b4; }
.tree-head div { display: flex; align-items: center; }
.tree-head .c1 { width: 28px; border-right: 1px solid #c4c4c4; padding-left: 2px; }
.tree-head .c2 { width: 28px; border-right: 1px solid #c4c4c4; padding-left: 4px; }
.tree-head .c3 { padding: 1px 0 0 2px; }
.tree-row { display: flex; align-items: center; padding: 1px 0 0 3px; }
.tree-row b { margin: 0 0 0 7px; font-size: 13px; letter-spacing: -.15px; }
.check { width: 14px; height: 14px; border: 1px solid #b3b3b3; background: #fff; flex: none; display: block; }
.second { margin-left: 14px; }
.mapicon { margin-left: 15px; }
.split { width: 18px; height: 3px; margin: 1px 0 0 207px; flex: none; background-image: radial-gradient(circle, #b0b0b0 .7px, transparent 1px); background-size: 3px 3px; }
.tabs { height: 28px; flex: none; display: flex; align-items: flex-end; margin-top: 1px; border-bottom: 1px solid #b3b3b3; }
.tab { height: 24px; border: 1px solid #b0b0b0; border-bottom: 0; margin-right: -1px; background: linear-gradient(#e0e0e0, #d6d6d6); text-align: center; padding: 5px 1px 0 0; border-radius: 3px 3px 0 0; color: #222; }
.t1 { width: 117px; } .t2 { width: 66px; } .t3 { width: 67px; } .t4 { width: 54px; }
.tab.active { height: 27px; background: linear-gradient(#fcfcfc, #ececec); margin-bottom: -1px; padding-top: 6px; }
.atlas-title { height: 20px; padding-top: 2px; }
.atlas { flex: 1; border: 1px solid #b6b6b6; border-right: 0; display: flex; flex-direction: column; }
.generate { height: 25px; display: flex; align-items: center; gap: 5px; padding: 0 0 3px 12px; color: #333; flex: none; letter-spacing: -.2px; }
.scroll { flex: 1; border: 1px solid #b0b0b0; border-right: 0; padding: 11px 4px 0 10px; }
h3 { margin: 0; font-size: 13px; line-height: 16px; display: flex; align-items: center; gap: 9px; padding-left: 2px; color: #000; letter-spacing: .02px; }
.group { border: 1px solid #d2d2d2; border-radius: 2px; background: #e8e8e8; width: 404px; padding: 0 11px 0 10px; }
.config { margin-top: 2px; height: 165px; padding-top: 10px; }
.row { display: flex; align-items: center; height: 24px; }
.config .row:nth-child(2) { height: 14px; margin: 10px 0; }
.config .row:nth-child(n+4) { margin-top: 6px; }
.lab { width: 96px; letter-spacing: -.15px; }
.lab3 { width: 129px; letter-spacing: -.2px; }
.ctext { padding-left: 5px; color: #333; white-space: nowrap; letter-spacing: -.23px; }
.row .lab2 { width: 82px; }
.grow { flex: 1; }
.combo, .field, .eps { height: 24px; border: 1px solid #a9a9a9; border-radius: 3px; display: flex; align-items: center; }
.combo { background: linear-gradient(#fff, #efefef); padding: 0 6px 0 5px; letter-spacing: -.19px; }
.combo span { padding-left: 2px; }
.combo .png { padding-left: 0; }
.arr { margin-left: auto; }
.field { background: #fff; padding-left: 4px; }
.field small { font-size: 9px; color: #666; width: 19px; letter-spacing: -.4px; font-weight: 500; }
.field b { margin-left: auto; width: 20px; height: 22px; border-left: 1px solid #b5b5b5; display: grid; place-items: center; background: linear-gradient(#fff, #efefef); }
.eps { width: 24px; height: 23px; margin-left: 6px; background: linear-gradient(#fafafa, #eee); border-color: #c6c6c6; color: #c2c2c2; justify-content: center; flex: none; }
.eps.on { color: #6b3a7b; border-color: #a9a9a9; height: 24px; }
.h-out { margin-top: 8px; }
.output { margin-top: 2px; height: 127px; padding-top: 11px; }
.olabel { height: 16px; margin-bottom: 5px; }
.ghost { color: #b9b9b9; padding-left: 2px; letter-spacing: -.24px; }
.output .row:nth-child(3) { height: 14px; margin: 10px 0; }
```
